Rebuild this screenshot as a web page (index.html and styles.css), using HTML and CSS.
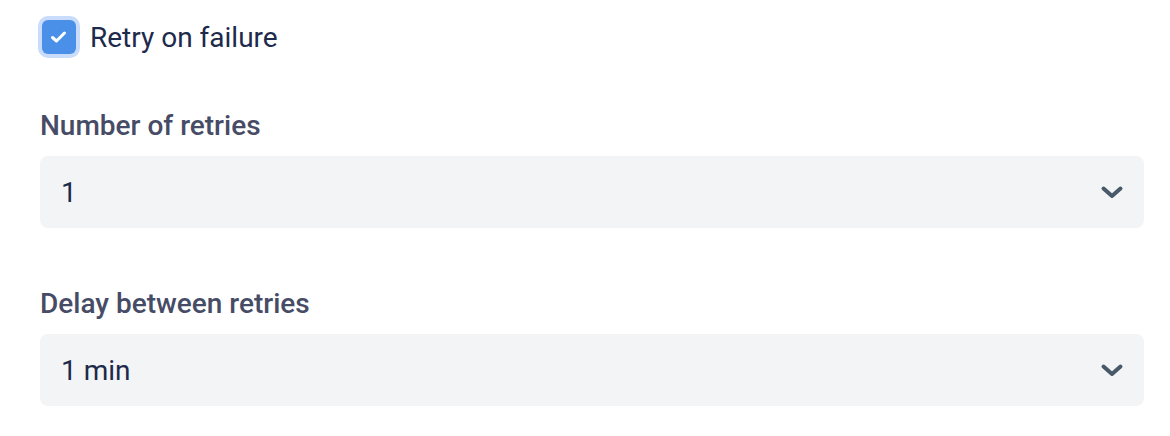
FILE: index.html
```html
<!DOCTYPE html>
<html lang="en">
<head>
  <meta charset="UTF-8" />
  <title>Retry settings</title>
  <link rel="stylesheet" href="styles.css">
</head>
<body>
  <div class="retry-settings">
    <!-- Retry toggle -->
    <label class="check-row">
      <span class="check-box">
        <svg viewBox="0 0 20 20" width="20" height="20">
          <path d="M3.5 10.5l4 3.5 8-8" fill="none" stroke="#fff" stroke-width="3" stroke-linecap="round" stroke-linejoin="round"/>
        </svg>
      </span>
      <span class="check-text">Retry on failure</span>
    </label>

    <!-- Number of retries -->
    <div class="field">
      <div class="field-label">Number of retries</div>
      <div class="select-box">
        <span class="select-value">1</span>
        <svg class="chevron" viewBox="0 0 24 16" width="24" height="16">
          <path d="M3.5 4.5l8.5 7.5 8.5-7.5" fill="none" stroke="#485a69" stroke-width="4" stroke-linecap="round" stroke-linejoin="round"/>
        </svg>
      </div>
    </div>

    <!-- Delay between retries -->
    <div class="field">
      <div class="field-label">Delay between retries</div>
      <div class="select-box">
        <span class="select-value">1 min</span>
        <svg class="chevron" viewBox="0 0 24 16" width="24" height="16">
          <path d="M3.5 4.5l8.5 7.5 8.5-7.5" fill="none" stroke="#485a69" stroke-width="4" stroke-linecap="round" stroke-linejoin="round"/>
        </svg>
      </div>
    </div>
  </div>
</body>
</html>
```

FILE: styles.css
```css
/* Base */
body {
  margin: 0;
  background: #fff;
  font-family: Roboto, "Liberation Sans", sans-serif;
}
.retry-settings {
  padding: 16px 26px 0 40px;
}
/* Checkbox row */
.check-row {
  display: flex;
  align-items: center;
  gap: 14px;
  height: 42px;
}
.check-box {
  width: 34px;
  height: 34px;
  margin-left: 2px;
  box-sizing: border-box;
  background: #4a90e8;
  border-radius: 6px;
  box-shadow: 0 0 0 4px #c9dcfb;
  display: flex;
  align-items: center;
  justify-content: center;
}
.check-text {
  font-size: 28px;
  color: #1d2a4b;
}
/* Select fields */
.field {
  margin-top: 52px;
}
.field + .field {
  margin-top: 60px;
}
.field-label {
  font-size: 28px;
  font-weight: 500;
  color: #474c66;
  line-height: 32px;
  margin-bottom: 14px;
}
.select-box {
  height: 72px;
  background: #f3f4f6;
  border-radius: 8px;
  display: flex;
  align-items: center;
  justify-content: space-between;
  padding: 0 20px 0 21px;
}
.select-value {
  font-size: 28px;
  color: #1d2a4b;
}
```
